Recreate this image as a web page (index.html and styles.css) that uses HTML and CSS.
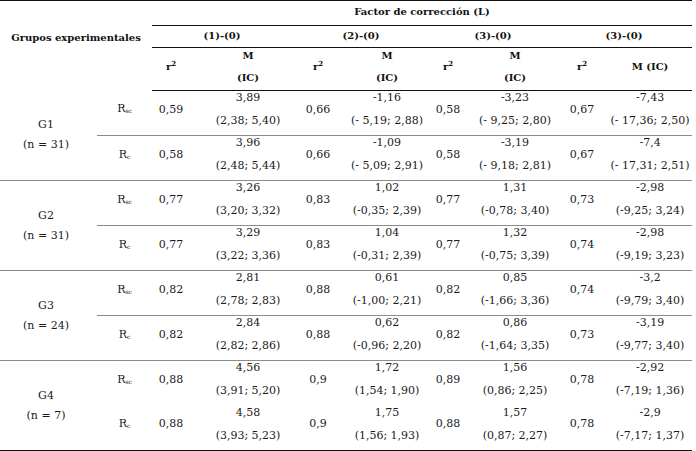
FILE: index.html
```html
<!DOCTYPE html>
<html lang="es">
<head>
<meta charset="utf-8">
<title>Factor de corrección</title>
<link rel="stylesheet" href="styles.css">
</head>
<body>
<table class="tbl">
  <colgroup>
    <col class="c-grp"><col class="c-r"><col class="c-r2a"><col class="c-m1">
    <col class="c-r2b"><col class="c-m2"><col class="c-r2c"><col class="c-m3">
    <col class="c-r2d"><col class="c-m4">
  </colgroup>
  <thead>
    <tr class="h1">
      <th class="corner" rowspan="3" colspan="2">Grupos experimentales</th>
      <th colspan="8">Factor de corrección (L)</th>
    </tr>
    <tr class="h2">
      <th colspan="2">(1)-(0)</th>
      <th colspan="2">(2)-(0)</th>
      <th colspan="2">(3)-(0)</th>
      <th colspan="2">(3)-(0)</th>
    </tr>
    <tr class="h3">
      <th>r<sup>2</sup></th><th class="two m1"><span>M</span><span>(IC)</span></th>
      <th>r<sup>2</sup></th><th class="two"><span>M</span><span>(IC)</span></th>
      <th>r<sup>2</sup></th><th class="two m3"><span>M</span><span>(IC)</span></th>
      <th>r<sup>2</sup></th><th>M (IC)</th>
    </tr>
  </thead>
  <tbody>
    <tr class="first">
      <td class="grp two" rowspan="2"><span>G1</span><span>(n = 31)</span></td>
      <td>R<sub>sc</sub></td>
      <td>0,59</td><td class="two m1"><span>3,89</span><span>(2,38; 5,40)</span></td>
      <td>0,66</td><td class="two"><span>-1,16</span><span>(- 5,19; 2,88)</span></td>
      <td>0,58</td><td class="two m3"><span>-3,23</span><span>(- 9,25; 2,80)</span></td>
      <td>0,67</td><td class="two"><span>-7,43</span><span>(- 17,36; 2,50)</span></td>
    </tr>
    <tr class="sub">
      <td>R<sub>c</sub></td>
      <td>0,58</td><td class="two m1"><span>3,96</span><span>(2,48; 5,44)</span></td>
      <td>0,66</td><td class="two"><span>-1,09</span><span>(- 5,09; 2,91)</span></td>
      <td>0,58</td><td class="two m3"><span>-3,19</span><span>(- 9,18; 2,81)</span></td>
      <td>0,67</td><td class="two"><span>-7,4</span><span>(- 17,31; 2,51)</span></td>
    </tr>
    <tr class="grp-start">
      <td class="grp two" rowspan="2"><span>G2</span><span>(n = 31)</span></td>
      <td>R<sub>sc</sub></td>
      <td>0,77</td><td class="two m1"><span>3,26</span><span>(3,20; 3,32)</span></td>
      <td>0,83</td><td class="two"><span>1,02</span><span>(-0,35; 2,39)</span></td>
      <td>0,77</td><td class="two m3"><span>1,31</span><span>(-0,78; 3,40)</span></td>
      <td>0,73</td><td class="two"><span>-2,98</span><span>(-9,25; 3,24)</span></td>
    </tr>
    <tr class="sub">
      <td>R<sub>c</sub></td>
      <td>0,77</td><td class="two m1"><span>3,29</span><span>(3,22; 3,36)</span></td>
      <td>0,83</td><td class="two"><span>1,04</span><span>(-0,31; 2,39)</span></td>
      <td>0,77</td><td class="two m3"><span>1,32</span><span>(-0,75; 3,39)</span></td>
      <td>0,74</td><td class="two"><span>-2,98</span><span>(-9,19; 3,23)</span></td>
    </tr>
    <tr class="grp-start">
      <td class="grp two" rowspan="2"><span>G3</span><span>(n = 24)</span></td>
      <td>R<sub>sc</sub></td>
      <td>0,82</td><td class="two m1"><span>2,81</span><span>(2,78; 2,83)</span></td>
      <td>0,88</td><td class="two"><span>0,61</span><span>(-1,00; 2,21)</span></td>
      <td>0,82</td><td class="two m3"><span>0,85</span><span>(-1,66; 3,36)</span></td>
      <td>0,74</td><td class="two"><span>-3,2</span><span>(-9,79; 3,40)</span></td>
    </tr>
    <tr class="sub">
      <td>R<sub>c</sub></td>
      <td>0,82</td><td class="two m1"><span>2,84</span><span>(2,82; 2,86)</span></td>
      <td>0,88</td><td class="two"><span>0,62</span><span>(-0,96; 2,20)</span></td>
      <td>0,82</td><td class="two m3"><span>0,86</span><span>(-1,64; 3,35)</span></td>
      <td>0,73</td><td class="two"><span>-3,19</span><span>(-9,77; 3,40)</span></td>
    </tr>
    <tr class="grp-start">
      <td class="grp two" rowspan="2"><span>G4</span><span>(n = 7)</span></td>
      <td>R<sub>sc</sub></td>
      <td>0,88</td><td class="two m1"><span>4,56</span><span>(3,91; 5,20)</span></td>
      <td>0,9</td><td class="two"><span>1,72</span><span>(1,54; 1,90)</span></td>
      <td>0,89</td><td class="two m3"><span>1,56</span><span>(0,86; 2,25)</span></td>
      <td>0,78</td><td class="two"><span>-2,92</span><span>(-7,19; 1,36)</span></td>
    </tr>
    <tr class="last">
      <td>R<sub>c</sub></td>
      <td>0,88</td><td class="two m1"><span>4,58</span><span>(3,93; 5,23)</span></td>
      <td>0,9</td><td class="two"><span>1,75</span><span>(1,56; 1,93)</span></td>
      <td>0,88</td><td class="two m3"><span>1,57</span><span>(0,87; 2,27)</span></td>
      <td>0,78</td><td class="two"><span>-2,9</span><span>(-7,17; 1,37)</span></td>
    </tr>
  </tbody>
</table>
</body>
</html>
```
FILE: styles.css
```css
html, body {
  margin: 0;
  padding: 0;
  background: #ffffff;
}

.tbl {
  width: 692px;
  border-collapse: collapse;
  table-layout: fixed;
  font-family: "DejaVu Serif", "Liberation Serif", serif;
  font-size: 11px;
  line-height: 14px;
  color: #1a1a1a;
  border-top: 1px solid #111;
  border-bottom: 1px solid #111;
}

.c-grp { width: 97px; }
.c-r   { width: 55px; }
.c-r2a { width: 38px; }
.c-m1  { width: 102px; }
.c-r2b { width: 52px; }
.c-m2  { width: 86px; }
.c-r2c { width: 36px; }
.c-m3  { width: 90px; }
.c-r2d { width: 52px; }
.c-m4  { width: 84px; }

th {
  font-weight: bold;
  font-size: 10px;
  color: #111;
  text-align: center;
  vertical-align: middle;
  padding: 0;
  white-space: nowrap;
}

.h1 th { height: 22px; padding-bottom: 2px; }
.h1 th.corner { padding-bottom: 15px; }
.h2 th { height: 20px; padding-bottom: 1px; border-top: 1px solid #111; }
.h3 th {
  height: 37px;
  padding-bottom: 5px;
  border-top: 1px solid #111;
  border-bottom: 1px solid #111;
}

.two > span {
  display: block;
  line-height: 14px;
}
.two > span + span { margin-top: 9px; }
th.two > span + span { margin-top: 8px; }

sup {
  font-size: 7px;
  vertical-align: 4px;
  line-height: 0;
}

sub {
  font-size: 6px;
  vertical-align: -1px;
  line-height: 0;
}

td {
  text-align: center;
  vertical-align: middle;
  padding: 0 0 7px;
  height: 37px;
  white-space: nowrap;
}

td.grp {
  padding: 0 5px 0 0;
}
td.grp > span + span { margin-top: 6px; }

.m1 { padding-left: 14px; }
.m3 { padding-left: 8px; }

.sub td, .grp-start td { border-top: 1px solid #8c8c8c; }
.last td { height: 38px; }
```
